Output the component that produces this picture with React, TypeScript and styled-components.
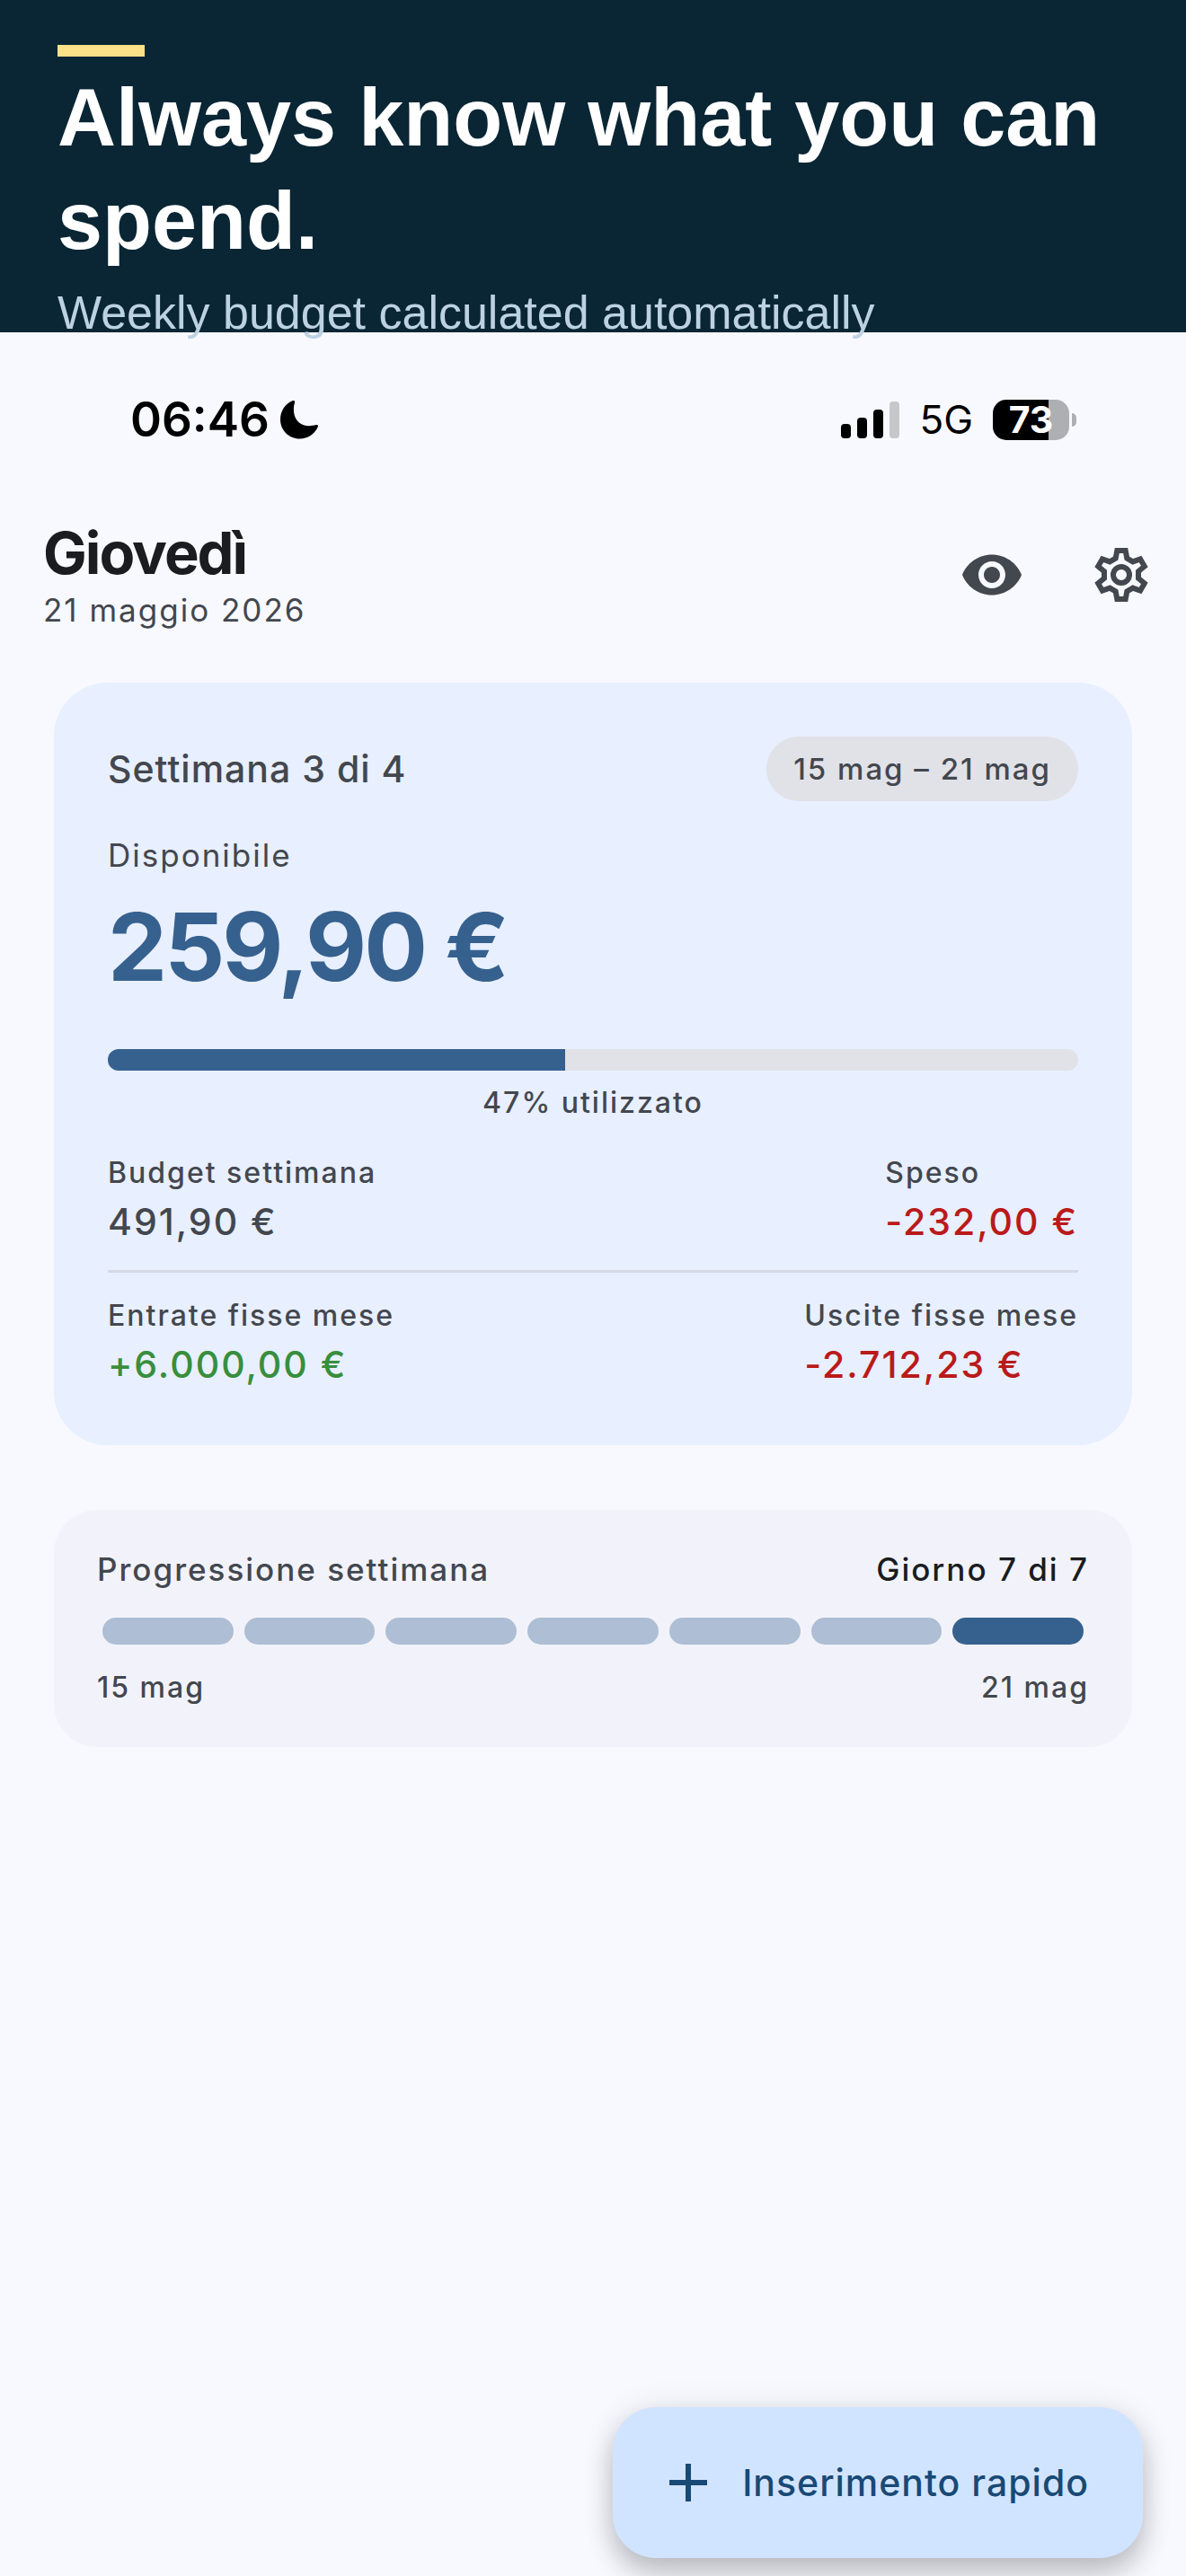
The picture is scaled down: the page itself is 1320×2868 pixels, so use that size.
import React from "react";
import styled, { createGlobalStyle } from "styled-components";

const GlobalStyle = createGlobalStyle`
  *, *::before, *::after { box-sizing: border-box; }
  body {
    margin: 0;
    background: #f8f9ff;
    color: #43474e;
    font-family: Inter, "Liberation Sans", sans-serif;
  }
  h1, h2, p, dl, dt, dd { margin: 0; }
`;

const Page = styled.div`
  min-height: 100vh;
  display: flex;
  flex-direction: column;
`;

const Banner = styled.header`
  height: 370px;
  padding: 50px 64px 0;
  background: #0a2634;
  font-family: "Liberation Sans", Arial, sans-serif;
`;

const Accent = styled.div`
  width: 97px;
  height: 13px;
  background: #fbe187;
`;

const Headline = styled.h1`
  margin-top: 11px;
  color: #fff;
  font-size: 90px;
  font-weight: 700;
  line-height: 115px;
`;

const Tagline = styled.p`
  margin-top: 14px;
  color: #bcd2e3;
  font-size: 52px;
  line-height: 60px;
  white-space: nowrap;
`;

const StatusBar = styled.div`
  display: flex;
  align-items: center;
  justify-content: space-between;
  height: 194px;
  padding: 0 122px 0 145px;
  color: #000;
`;

const StatusGroup = styled.div<{ $gap: number }>`
  display: flex;
  align-items: center;
  gap: ${(p) => p.$gap}px;
`;

const Clock = styled.span`
  font-size: 53px;
  font-weight: 600;
  line-height: 60px;
`;

const Network = styled.span`
  font-size: 44px;
  line-height: 60px;
`;

const Signal = styled.div`
  display: flex;
  align-items: flex-end;
  gap: 7px;
  height: 42px;
`;

const SignalBar = styled.span<{ $height: number; $off?: boolean }>`
  width: 11px;
  height: ${(p) => p.$height}px;
  border-radius: 4px;
  background: ${(p) => (p.$off ? "#c6c7cb" : "#000")};
`;

const Battery = styled.div`
  display: flex;
  align-items: center;
  gap: 3px;
`;

const BatteryBody = styled.div`
  width: 85px;
  height: 45px;
  border-radius: 15px;
  background: linear-gradient(90deg, #000 73%, #aeafb3 73%);
  color: #fff;
  font-size: 41px;
  font-weight: 700;
  line-height: 45px;
  text-align: center;
`;

const BatteryTip = styled.span`
  width: 5px;
  height: 15px;
  border-radius: 0 5px 5px 0;
  background: #aeafb3;
`;

const TopBar = styled.div`
  display: flex;
  align-items: center;
  justify-content: space-between;
  padding: 13px 36px 57px 48px;
`;

const Weekday = styled.h2`
  color: #1a1c20;
  font-size: 65px;
  font-weight: 700;
  letter-spacing: -2px;
  line-height: 78px;
`;

const DateLine = styled.p`
  font-size: 35px;
  letter-spacing: 2px;
  line-height: 48px;
`;

const Actions = styled.div`
  display: flex;
  gap: 72px;
`;

const IconButton = styled.button`
  display: flex;
  padding: 0;
  border: 0;
  background: none;
  color: #43474e;
  cursor: pointer;
`;

const Content = styled.main`
  flex: 1;
  display: flex;
  flex-direction: column;
  gap: 72px;
  padding: 0 60px;
`;

const BudgetCard = styled.section`
  padding: 60px;
  border-radius: 60px;
  background: #e8efff;
`;

const Row = styled.div`
  display: flex;
  align-items: center;
  justify-content: space-between;
`;

const CardTitle = styled.h2`
  font-size: 41px;
  font-weight: 500;
  letter-spacing: 1px;
  line-height: 60px;
`;

const Pill = styled.span`
  padding: 12px 30px;
  border-radius: 36px;
  background: #e1e2e8;
  font-size: 33px;
  font-weight: 500;
  letter-spacing: 2px;
  line-height: 48px;
`;

const Caption = styled.p`
  margin-top: 36px;
  font-size: 35px;
  letter-spacing: 2px;
  line-height: 48px;
`;

const Available = styled.p`
  margin-top: 12px;
  color: #36618e;
  font-size: 105px;
  font-weight: 700;
  letter-spacing: -3px;
  line-height: 132px;
`;

const Track = styled.div`
  height: 24px;
  margin-top: 48px;
  border-radius: 12px;
  background: #e1e2e8;
  overflow: hidden;
`;

const Fill = styled.div`
  height: 100%;
  background: #36618e;
`;

const Small = styled.span`
  font-size: 32px;
  font-weight: 500;
  letter-spacing: 2px;
  line-height: 48px;
`;

const UsedNote = styled(Small)`
  display: block;
  margin: 12px 0 30px;
  text-align: center;
`;

const Figures = styled.dl`
  display: flex;
  justify-content: space-between;
`;

const Label = styled(Small).attrs({ as: "dt" })``;

const Value = styled.dd<{ $color?: string }>`
  color: ${(p) => p.$color ?? "inherit"};
  font-size: 41px;
  font-weight: 500;
  letter-spacing: 2px;
  line-height: 60px;
`;

const Divider = styled.hr`
  height: 3px;
  margin: 24px 0;
  border: 0;
  background: #d4d9e5;
`;

const ProgressCard = styled.section`
  padding: 42px 48px;
  border-radius: 48px;
  background: #f2f3fa;
`;

const ProgressTitle = styled.span<{ $strong?: boolean }>`
  color: ${(p) => (p.$strong ? "#1a1c20" : "inherit")};
  font-size: 35px;
  font-weight: 500;
  letter-spacing: 2px;
  line-height: 48px;
`;

const Days = styled.div`
  display: flex;
  gap: 12px;
  margin: 30px 6px 24px;
`;

const Day = styled.span<{ $today: boolean }>`
  flex: 1;
  height: 30px;
  border-radius: 15px;
  background: ${(p) => (p.$today ? "#36618e" : "#aebed4")};
`;

const Footer = styled.footer`
  display: flex;
  justify-content: flex-end;
  padding: 0 48px 20px;
`;

const QuickAdd = styled.button`
  display: flex;
  align-items: center;
  gap: 24px;
  height: 168px;
  padding: 0 60px 0 48px;
  border: 0;
  border-radius: 48px;
  background: #d1e4ff;
  box-shadow: 0 18px 30px rgba(0, 0, 0, 0.2), 0 3px 36px rgba(0, 0, 0, 0.1);
  color: #194975;
  font-family: inherit;
  font-size: 41px;
  font-weight: 500;
  letter-spacing: 1px;
  line-height: 60px;
  cursor: pointer;
`;

const MoonIcon = () => (
  <svg width="42" height="43" viewBox="0 0 42 43" aria-hidden="true">
    <path
      fill="currentColor"
      d="M13.4.3C14.9-.4 16.4.4 16 1.9C12.5 14 17 28 31.5 28.2C34.5 28.2 37 27.9 39.9 27.1C41.5 26.7 42.4 27.9 41.8 29.3C38 37.5 30.5 42.5 21.5 42.5C9.5 42.5 0 33 0 21C0 12 5 4 13.4.3Z"
    />
  </svg>
);

const EyeIcon = () => (
  <svg width="72" height="72" viewBox="0 0 24 24" fill="currentColor" aria-hidden="true">
    <path d="M12 4.5C7 4.5 2.73 7.61 1 12c1.73 4.39 6 7.5 11 7.5s9.27-3.11 11-7.5c-1.730-4.390-6-7.500-11-7.500zM12 17c-2.760 0-5-2.240-5-5s2.240-5 5-5 5 2.240 5 5-2.240 5-5 5zm0-8c-1.660 0-3 1.340-3 3s1.340 3 3 3 3-1.340 3-3-1.340-3-3-3z" />
  </svg>
);

const GearIcon = () => (
  <svg width="72" height="72" viewBox="0 0 72 72" fill="none" stroke="currentColor" strokeWidth="6" aria-hidden="true">
    <path d="M31.3 8.9H40.7L42.3 17.6L48.8 21.4L57.1 18.4L61.8 26.5L55 32.2V39.8L61.8 45.5L57.1 53.6L48.8 50.6L42.3 54.4L40.7 63.1H31.3L29.7 54.4L23.2 50.6L14.9 53.6L10.2 45.5L17 39.8V32.2L10.2 26.5L14.9 18.4L23.2 21.4L29.7 17.6Z" />
    <circle cx="36" cy="36" r="9" />
  </svg>
);

const PlusIcon = () => (
  <svg width="72" height="72" viewBox="0 0 24 24" fill="currentColor" aria-hidden="true">
    <path d="M19 13h-6v6h-2v-6H5v-2h6V5h2v6h6v2z" />
  </svg>
);

const RED = "#ba1a1a";
const GREEN = "#388e3c";
const USED = 232 / 491.9;
const DAYS = [15, 16, 17, 18, 19, 20, 21];
const TODAY = 21;

type FigureProps = { label: string; value: string; color?: string };

const Figure = ({ label, value, color }: FigureProps) => (
  <div>
    <Label>{label}</Label>
    <Value $color={color}>{value}</Value>
  </div>
);

export default function App() {
  return (
    <Page>
      <GlobalStyle />
      <Banner>
        <Accent />
        <Headline>Always know what you can spend.</Headline>
        <Tagline>Weekly budget calculated automatically</Tagline>
      </Banner>

      <StatusBar>
        <StatusGroup $gap={12}>
          <Clock>06:46</Clock>
          <MoonIcon />
        </StatusGroup>
        <StatusGroup $gap={22}>
          <Signal>
            <SignalBar $height={16} />
            <SignalBar $height={23} />
            <SignalBar $height={32} />
            <SignalBar $height={41} $off />
          </Signal>
          <Network>5G</Network>
          <Battery>
            <BatteryBody>73</BatteryBody>
            <BatteryTip />
          </Battery>
        </StatusGroup>
      </StatusBar>

      <TopBar>
        <div>
          <Weekday>Giovedì</Weekday>
          <DateLine>21 maggio 2026</DateLine>
        </div>
        <Actions>
          <IconButton type="button" aria-label="Mostra importi">
            <EyeIcon />
          </IconButton>
          <IconButton type="button" aria-label="Impostazioni">
            <GearIcon />
          </IconButton>
        </Actions>
      </TopBar>

      <Content>
        <BudgetCard>
          <Row>
            <CardTitle>Settimana 3 di 4</CardTitle>
            <Pill>15 mag – 21 mag</Pill>
          </Row>
          <Caption>Disponibile</Caption>
          <Available>259,90 €</Available>
          <Track>
            <Fill style={{ width: `${USED * 100}%` }} />
          </Track>
          <UsedNote>47% utilizzato</UsedNote>
          <Figures>
            <Figure label="Budget settimana" value="491,90 €" />
            <Figure label="Speso" value="-232,00 €" color={RED} />
          </Figures>
          <Divider />
          <Figures>
            <Figure label="Entrate fisse mese" value="+6.000,00 €" color={GREEN} />
            <Figure label="Uscite fisse mese" value="-2.712,23 €" color={RED} />
          </Figures>
        </BudgetCard>

        <ProgressCard>
          <Row>
            <ProgressTitle>Progressione settimana</ProgressTitle>
            <ProgressTitle $strong>Giorno 7 di 7</ProgressTitle>
          </Row>
          <Days>
            {DAYS.map((day) => (
              <Day key={day} $today={day === TODAY} />
            ))}
          </Days>
          <Row>
            <Small>15 mag</Small>
            <Small>21 mag</Small>
          </Row>
        </ProgressCard>
      </Content>

      <Footer>
        <QuickAdd type="button">
          <PlusIcon />
          Inserimento rapido
        </QuickAdd>
      </Footer>
    </Page>
  );
}
